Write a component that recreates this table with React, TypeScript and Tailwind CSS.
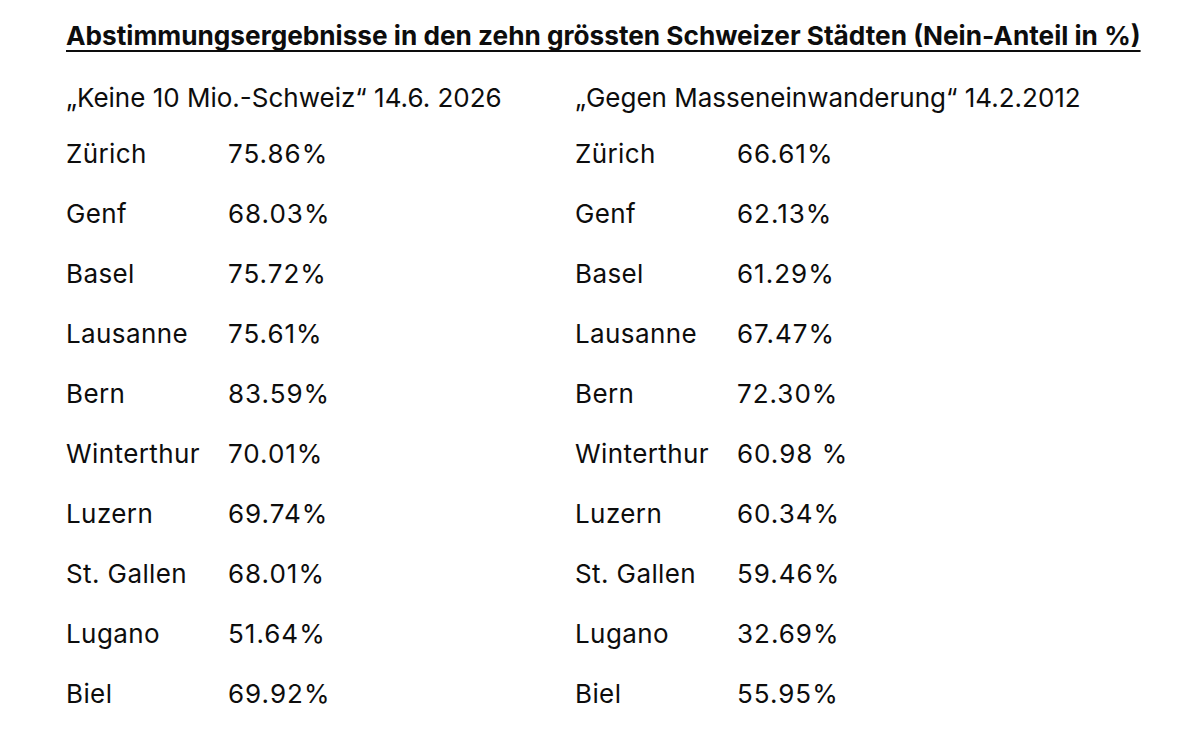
const left = [
  ["Zürich", "75.86%"],
  ["Genf", "68.03%"],
  ["Basel", "75.72%"],
  ["Lausanne", "75.61%"],
  ["Bern", "83.59%"],
  ["Winterthur", "70.01%"],
  ["Luzern", "69.74%"],
  ["St. Gallen", "68.01%"],
  ["Lugano", "51.64%"],
  ["Biel", "69.92%"],
];

const right = [
  ["Zürich", "66.61%"],
  ["Genf", "62.13%"],
  ["Basel", "61.29%"],
  ["Lausanne", "67.47%"],
  ["Bern", "72.30%"],
  ["Winterthur", "60.98 %"],
  ["Luzern", "60.34%"],
  ["St. Gallen", "59.46%"],
  ["Lugano", "32.69%"],
  ["Biel", "55.95%"],
];

const Column = ({ title, rows }: { title: string; rows: string[][] }) => {
  return (
    <div className="w-[509px]">
      <div className="h-[52px] flex items-center">{title}</div>
      {rows.map(([city, value]) => (
        <div key={city} className="h-[60px] flex items-center">
          <span className="w-[162px] tracking-[0.4px]">{city}</span>
          <span className="tracking-[1px]">{value}</span>
        </div>
      ))}
    </div>
  );
};

const App = () => {
  return (
    <div
      className="w-[1200px] h-[754px] bg-white text-[#0d0d0d] pt-[1px] pl-[66px] overflow-hidden"
      style={{ fontFamily: "Inter, 'Liberation Sans', sans-serif" }}
    >
      <div className="h-[70px] flex items-center">
        <h1 className="font-bold text-[26.2px] underline underline-offset-[5px] decoration-2">
          Abstimmungsergebnisse in den zehn grössten Schweizer Städten (Nein-Anteil in %)
        </h1>
      </div>
      <div className="flex text-[26px]">
        <Column title="„Keine 10 Mio.-Schweiz“ 14.6. 2026" rows={left} />
        <Column title="„Gegen Masseneinwanderung“ 14.2.2012" rows={right} />
      </div>
    </div>
  );
};

export default App;
